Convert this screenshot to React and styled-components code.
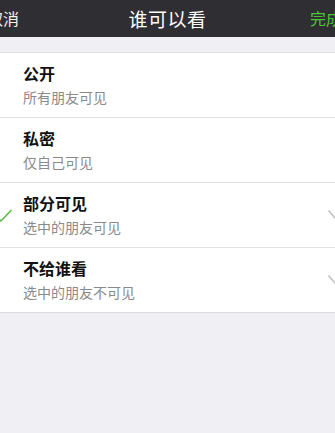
import React, { useState } from 'react'
import styled, { createGlobalStyle } from 'styled-components'

const GlobalStyle = createGlobalStyle`
  html, body {
    margin: 0;
    padding: 0;
    background: #efeff4;
  }
  body {
    font-family: "Noto Sans CJK SC", "Noto Sans", sans-serif;
    overflow: hidden;
  }
`

const Page = styled.div`
  width: 335px;
  height: 433px;
  overflow: hidden;
  background: #efeff4;
`

const NavBar = styled.div`
  height: 37px;
  background: #2f2e32;
  display: grid;
  grid-template-columns: 1fr auto 1fr;
  align-items: center;
`

const NavAction = styled.span`
  font-size: 16px;
  line-height: 37px;
  white-space: nowrap;
  color: ${({ accent }) => (accent ? '#50c03a' : '#f2f2f2')};
  justify-self: ${({ accent }) => (accent ? 'end' : 'start')};
  margin: ${({ accent }) => (accent ? '0 -7px 0 0' : '0 0 0 -13px')};
`

const Title = styled.span`
  font-size: 19px;
  color: #ffffff;
  letter-spacing: 0.5px;
`

const List = styled.ul`
  list-style: none;
  margin: 15px 0 0;
  padding: 0;
  background: #fff;
  border-top: 1px solid #e2e2e6;
  border-bottom: 1px solid #dcdce0;
`

const Row = styled.li`
  height: 64px;
  display: flex;
  align-items: center;
  cursor: pointer;
  & + & {
    border-top: 1px solid #e2e2e2;
  }
`

const CheckSlot = styled.div`
  width: 23px;
  flex: none;
  display: flex;
  align-items: center;
  svg {
    margin-left: -5px;
    margin-top: 2px;
  }
`

const Texts = styled.div`
  flex: 1;
  display: flex;
  flex-direction: column;
  padding-bottom: 2px;
`

const Name = styled.span`
  font-size: 16px;
  font-weight: 700;
  color: #111;
  line-height: 22px;
`

const Desc = styled.span`
  font-size: 14px;
  color: #8a8a8a;
  line-height: 20px;
  margin-top: 3px;
`

const ChevronSlot = styled.div`
  width: 7px;
  flex: none;
  display: flex;
  svg {
    margin-right: -8px;
  }
`

const Check = () => (
  <svg width="18" height="14" viewBox="0 0 18 14">
    <path d="M1 7.5 L6 12 L16.5 1" fill="none" stroke="#5cb84a" strokeWidth="1.6" />
  </svg>
)

const Chevron = () => (
  <svg width="15" height="10" viewBox="0 0 15 10">
    <path d="M0.5 0.5 L7.5 8.5 L14.5 0.5" fill="none" stroke="#c4c4c8" strokeWidth="1.6" />
  </svg>
)

const options = [
  { name: '公开', desc: '所有朋友可见' },
  { name: '私密', desc: '仅自己可见' },
  { name: '部分可见', desc: '选中的朋友可见', expand: true },
  { name: '不给谁看', desc: '选中的朋友不可见', expand: true },
]

const App = () => {
  const [selected, setSelected] = useState(2)

  return (
    <Page>
      <GlobalStyle />
      <NavBar>
        <NavAction>取消</NavAction>
        <Title>谁可以看</Title>
        <NavAction accent>完成</NavAction>
      </NavBar>

      <List>
        {options.map(({ name, desc, expand }, key) => (
          <Row key={name} onClick={() => setSelected(key)}>
            <CheckSlot>{selected === key && <Check />}</CheckSlot>
            <Texts>
              <Name>{name}</Name>
              <Desc>{desc}</Desc>
            </Texts>
            <ChevronSlot>{expand && <Chevron />}</ChevronSlot>
          </Row>
        ))}
      </List>
    </Page>
  )
}

export default App
